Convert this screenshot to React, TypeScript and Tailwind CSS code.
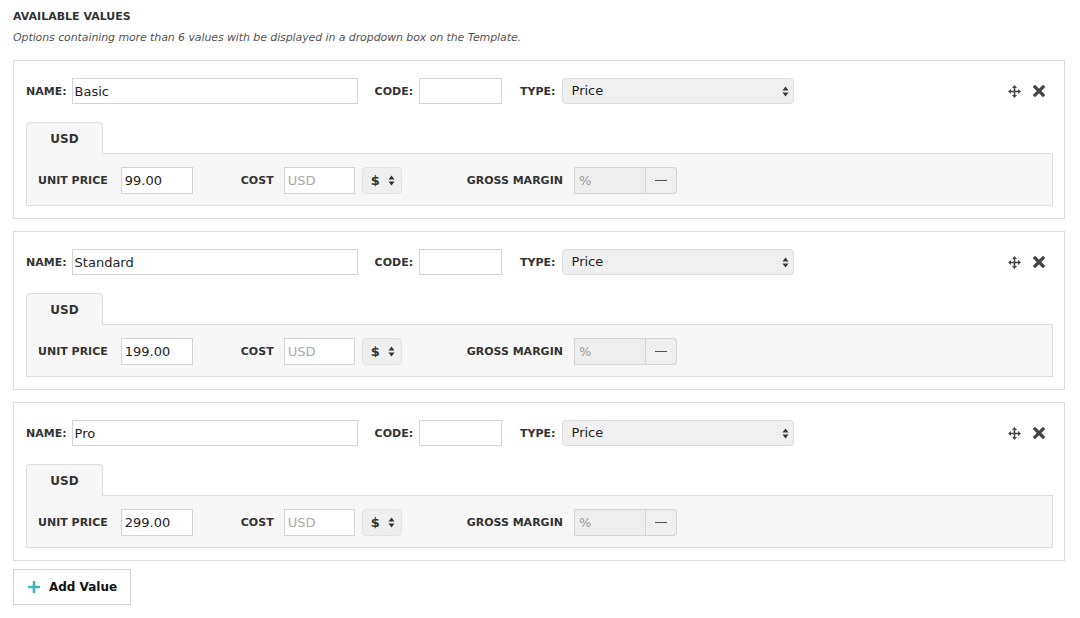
import React from "react";
import { FaPlus } from "react-icons/fa";

const values = [
  { name: "Basic", price: "99.00" },
  { name: "Standard", price: "199.00" },
  { name: "Pro", price: "299.00" },
];

// small stacked up/down triangles used on the fake selects
function UpDown() {
  return (
    <svg width="7" height="11" viewBox="0 0 7 11" className="shrink-0">
      <path d="M3.5 0.5 L6.5 4.5 L0.5 4.5 Z" fill="#333" />
      <path d="M3.5 10.5 L6.5 6.5 L0.5 6.5 Z" fill="#333" />
    </svg>
  );
}

function MoveIcon() {
  return (
    <svg width="13" height="13" viewBox="0 0 13 13">
      <path d="M6.5 2 L6.5 11 M2 6.5 L11 6.5" stroke="#444" strokeWidth="1.6" />
      <path d="M6.5 0 L9 3 L4 3 Z" fill="#444" />
      <path d="M6.5 13 L9 10 L4 10 Z" fill="#444" />
      <path d="M0 6.5 L3 4 L3 9 Z" fill="#444" />
      <path d="M13 6.5 L10 4 L10 9 Z" fill="#444" />
    </svg>
  );
}

function CloseIcon() {
  return (
    <svg width="12" height="12" viewBox="0 0 12 12">
      <path d="M2 2 L10 10 M10 2 L2 10" stroke="#444" strokeWidth="3.2" strokeLinecap="square" />
    </svg>
  );
}

const label = "text-[11px] font-bold text-[#333] mt-[2px]";

function ValueCard({ name, price }: { name: string; price: string }) {
  return (
    <div className="border border-[#dedede] bg-white pt-[17px] pb-[12px] pl-[11px] pr-[11px]">
      {/* name / code / type */}
      <div className="flex items-center">
        <span className={label + " ml-[1px]"}>NAME:</span>
        <input
          readOnly
          value={name}
          className="ml-[5px] w-[286px] h-[26px] border border-[#d4d4d4] px-[2px] text-[13px] text-[#222] outline-none"
        />
        <span className={label + " ml-[17px]"}>CODE:</span>
        <input
          readOnly
          value=""
          className="ml-[6px] w-[83px] h-[26px] border border-[#d4d4d4] px-[4px] text-[13px] outline-none"
        />
        <span className={label + " ml-[18px]"}>TYPE:</span>
        <div className="ml-[6px] w-[232px] h-[26px] flex items-center justify-between bg-[#f0f0f0] border border-[#dcdcdc] rounded-[4px] pl-[9px] pr-[4px] text-[13px] text-[#222]">
          <span>Price</span>
          <UpDown />
        </div>
        <div className="ml-auto flex items-center gap-[12px] mr-[8px]">
          <MoveIcon />
          <CloseIcon />
        </div>
      </div>

      {/* currency tab */}
      <div className="mt-[17px] ml-[1px]">
        <div className="w-[77px] h-[32px] flex items-center justify-center text-[12px] font-bold text-[#333] bg-[#f7f7f7] border border-[#dedede] border-b-0 rounded-t-[4px] relative top-[1px]">
          USD
        </div>
        <div className="bg-[#f7f7f7] border border-[#dedede] h-[53px] flex items-center pl-[11px] pt-[2px]">
          <span className={label}>UNIT PRICE</span>
          <input
            readOnly
            value={price}
            className="ml-[13px] w-[72px] h-[27px] bg-white border border-[#d4d4d4] px-[3px] text-[13px] text-[#222] outline-none"
          />
          <span className={label + " ml-[48px]"}>COST</span>
          <input
            readOnly
            placeholder="USD"
            className="ml-[10px] w-[71px] h-[27px] bg-white border border-[#d4d4d4] px-[3px] text-[13px] placeholder:text-[#aaa] outline-none"
          />
          <div className="ml-[7px] w-[40px] h-[27px] flex items-center justify-between bg-[#efefef] border border-[#e3e3e3] rounded-[4px] pl-[8px] pr-[6px] text-[13px] font-bold text-[#333]">
            <span>$</span>
            <UpDown />
          </div>
          <span className={label + " ml-[65px]"}>GROSS MARGIN</span>
          <div className="ml-[11px] flex h-[27px]">
            <div className="w-[72px] bg-[#eeeeee] border border-[#d4d4d4] px-[4px] flex items-center text-[13px] text-[#999]">
              %
            </div>
            <div className="w-[31px] bg-[#f0f0f0] border border-l-0 border-[#d4d4d4] rounded-r-[4px] flex items-center justify-center">
              <div className="w-[12px] h-[1px] bg-[#555]" />
            </div>
          </div>
        </div>
      </div>
    </div>
  );
}

export default function App() {
  return (
    <div
      className="w-[1080px] h-[618px] bg-white text-[#333] px-[13px] pt-[9px] overflow-hidden"
      style={{ fontFamily: '"DejaVu Sans", Verdana, sans-serif' }}
    >
      <h2 className="text-[11px] font-bold text-[#333] leading-[16px]">AVAILABLE VALUES</h2>
      <p className="text-[11px] italic text-[#555] leading-[16px] mt-[5px] tracking-[-0.1px]">
        Options containing more than 6 values with be displayed in a dropdown box on the Template.
      </p>

      <div className="w-[1052px] mt-[14px] flex flex-col gap-[12px]">
        {values.map((v) => (
          <ValueCard key={v.name} name={v.name} price={v.price} />
        ))}
      </div>

      <button className="mt-[8px] w-[118px] h-[36px] border border-[#d4d4d4] bg-white flex items-center justify-center gap-[8px] text-[12px] font-bold text-[#111]">
        <FaPlus className="text-[#45b3bd]" size={14} />
        Add Value
      </button>
    </div>
  );
}
